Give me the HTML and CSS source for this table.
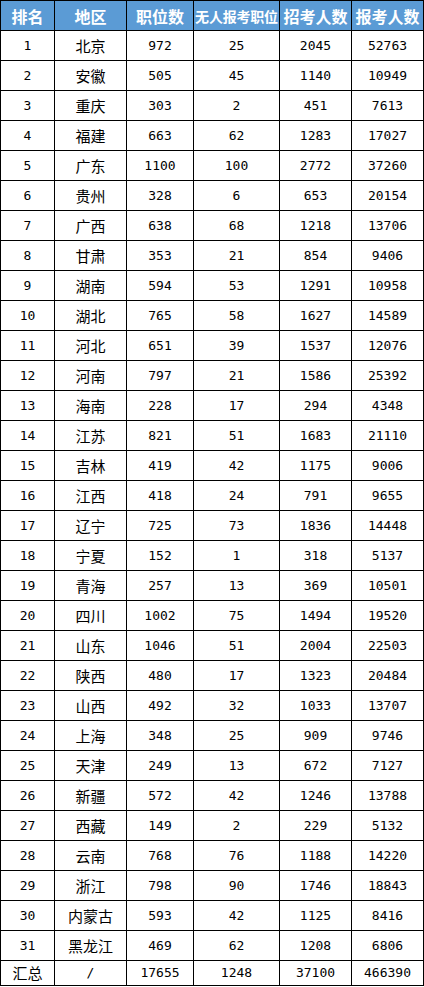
FILE: index.html
```html
<!DOCTYPE html>
<html lang="zh">
<head>
<meta charset="utf-8">
<title>各地区报考人数</title>
<link rel="stylesheet" href="styles.css">
</head>
<body>
<table class="stats">
<colgroup>
<col class="c1"><col class="c2"><col class="c3"><col class="c4"><col class="c5"><col class="c6">
</colgroup>
<thead>
<tr><th>排名</th><th>地区</th><th>职位数</th><th class="narrow">无人报考职位</th><th>招考人数</th><th>报考人数</th></tr>
</thead>
<tbody>
<tr><td>1</td><td class="zh">北京</td><td>972</td><td>25</td><td>2045</td><td>52763</td></tr>
<tr><td>2</td><td class="zh">安徽</td><td>505</td><td>45</td><td>1140</td><td>10949</td></tr>
<tr><td>3</td><td class="zh">重庆</td><td>303</td><td>2</td><td>451</td><td>7613</td></tr>
<tr><td>4</td><td class="zh">福建</td><td>663</td><td>62</td><td>1283</td><td>17027</td></tr>
<tr><td>5</td><td class="zh">广东</td><td>1100</td><td>100</td><td>2772</td><td>37260</td></tr>
<tr><td>6</td><td class="zh">贵州</td><td>328</td><td>6</td><td>653</td><td>20154</td></tr>
<tr><td>7</td><td class="zh">广西</td><td>638</td><td>68</td><td>1218</td><td>13706</td></tr>
<tr><td>8</td><td class="zh">甘肃</td><td>353</td><td>21</td><td>854</td><td>9406</td></tr>
<tr><td>9</td><td class="zh">湖南</td><td>594</td><td>53</td><td>1291</td><td>10958</td></tr>
<tr><td>10</td><td class="zh">湖北</td><td>765</td><td>58</td><td>1627</td><td>14589</td></tr>
<tr><td>11</td><td class="zh">河北</td><td>651</td><td>39</td><td>1537</td><td>12076</td></tr>
<tr><td>12</td><td class="zh">河南</td><td>797</td><td>21</td><td>1586</td><td>25392</td></tr>
<tr><td>13</td><td class="zh">海南</td><td>228</td><td>17</td><td>294</td><td>4348</td></tr>
<tr><td>14</td><td class="zh">江苏</td><td>821</td><td>51</td><td>1683</td><td>21110</td></tr>
<tr><td>15</td><td class="zh">吉林</td><td>419</td><td>42</td><td>1175</td><td>9006</td></tr>
<tr><td>16</td><td class="zh">江西</td><td>418</td><td>24</td><td>791</td><td>9655</td></tr>
<tr><td>17</td><td class="zh">辽宁</td><td>725</td><td>73</td><td>1836</td><td>14448</td></tr>
<tr><td>18</td><td class="zh">宁夏</td><td>152</td><td>1</td><td>318</td><td>5137</td></tr>
<tr><td>19</td><td class="zh">青海</td><td>257</td><td>13</td><td>369</td><td>10501</td></tr>
<tr><td>20</td><td class="zh">四川</td><td>1002</td><td>75</td><td>1494</td><td>19520</td></tr>
<tr><td>21</td><td class="zh">山东</td><td>1046</td><td>51</td><td>2004</td><td>22503</td></tr>
<tr><td>22</td><td class="zh">陕西</td><td>480</td><td>17</td><td>1323</td><td>20484</td></tr>
<tr><td>23</td><td class="zh">山西</td><td>492</td><td>32</td><td>1033</td><td>13707</td></tr>
<tr><td>24</td><td class="zh">上海</td><td>348</td><td>25</td><td>909</td><td>9746</td></tr>
<tr><td>25</td><td class="zh">天津</td><td>249</td><td>13</td><td>672</td><td>7127</td></tr>
<tr><td>26</td><td class="zh">新疆</td><td>572</td><td>42</td><td>1246</td><td>13788</td></tr>
<tr><td>27</td><td class="zh">西藏</td><td>149</td><td>2</td><td>229</td><td>5132</td></tr>
<tr><td>28</td><td class="zh">云南</td><td>768</td><td>76</td><td>1188</td><td>14220</td></tr>
<tr><td>29</td><td class="zh">浙江</td><td>798</td><td>90</td><td>1746</td><td>18843</td></tr>
<tr><td>30</td><td class="zh">内蒙古</td><td>593</td><td>42</td><td>1125</td><td>8416</td></tr>
<tr><td>31</td><td class="zh">黑龙江</td><td>469</td><td>62</td><td>1208</td><td>6806</td></tr>
<tr class="total"><td class="zh">汇总</td><td>/</td><td>17655</td><td>1248</td><td>37100</td><td>466390</td></tr>
</tbody>
</table>
</body>
</html>
```

FILE: styles.css
```css
html, body {
  margin: 0;
  padding: 0;
  background: #ffffff;
}

.stats {
  border-collapse: collapse;
  table-layout: fixed;
  width: 423px;
  font-family: "DejaVu Sans Mono", "Noto Sans CJK SC", monospace;
  font-size: 13px;
  color: #000000;
}

.c1 { width: 54px; }
.c2 { width: 72px; }
.c3 { width: 67px; }
.c4 { width: 86px; }
.c5 { width: 72px; }
.c6 { width: 72px; }

.stats th,
.stats td {
  border: 1px solid #000000;
  padding: 0;
  text-align: center;
  vertical-align: middle;
  height: 29px;
  line-height: 16px;
  overflow: hidden;
  white-space: nowrap;
}

.stats th {
  background: #5b9bd5;
  color: #ffffff;
  font-family: "Noto Sans CJK SC", sans-serif;
  font-weight: bold;
  font-size: 16px;
}

.stats th.narrow {
  font-size: 14px;
  letter-spacing: -0.2px;
}

.stats td.zh {
  font-family: "Noto Sans CJK SC", sans-serif;
  font-size: 15px;
}

.stats tr.total td {
  height: 24px;
}
```
